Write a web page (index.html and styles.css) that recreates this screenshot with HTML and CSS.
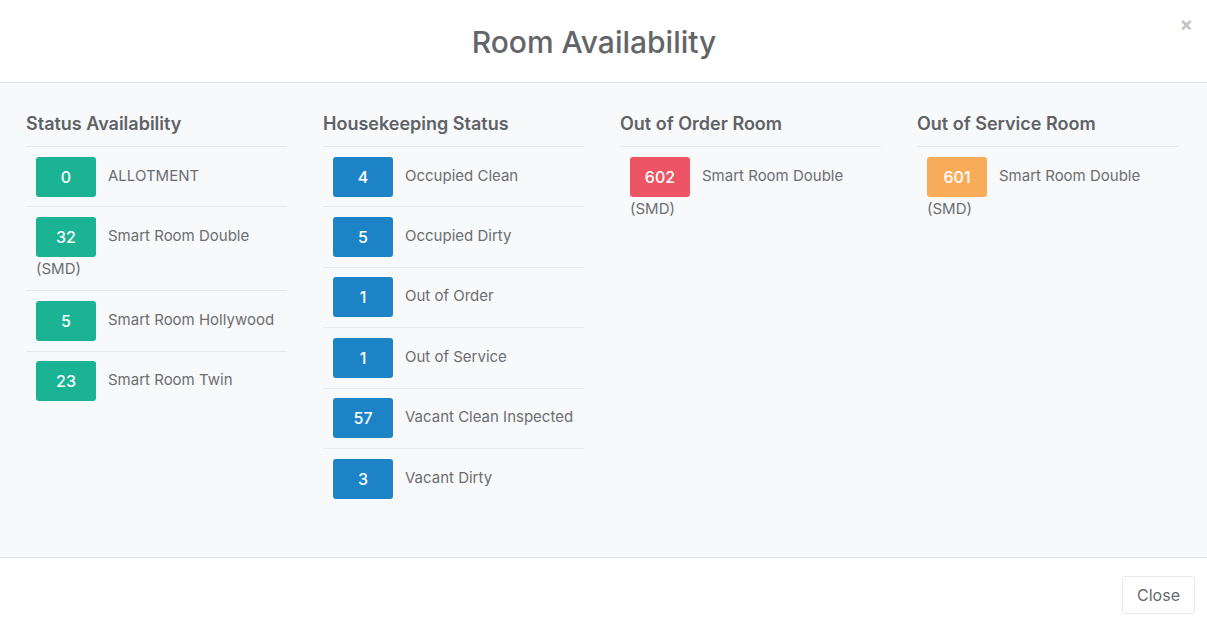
FILE: index.html
```html
<!DOCTYPE html>
<html>

<head lang="en">
  <meta charset="UTF-8">
  <title>Room Availability</title>
  <link rel="stylesheet" href="styles.css">
</head>

<body>
  <div class="modal">
    <div class="modal-header">
      <span class="close">&times;</span>
      <h4 class="modal-title">Room Availability</h4>
    </div>

    <div class="modal-body">
      <div class="col">
        <h3>Status Availability</h3>
        <ul class="list">
          <li><span class="badge green">0</span>ALLOTMENT</li>
          <li><span class="badge green">32</span>Smart Room Double (SMD)</li>
          <li><span class="badge green">5</span>Smart Room Hollywood</li>
          <li><span class="badge green">23</span>Smart Room Twin</li>
        </ul>
      </div>

      <div class="col">
        <h3>Housekeeping Status</h3>
        <ul class="list">
          <li><span class="badge blue">4</span>Occupied Clean</li>
          <li><span class="badge blue">5</span>Occupied Dirty</li>
          <li><span class="badge blue">1</span>Out of Order</li>
          <li><span class="badge blue">1</span>Out of Service</li>
          <li><span class="badge blue">57</span>Vacant Clean Inspected</li>
          <li><span class="badge blue">3</span>Vacant Dirty</li>
        </ul>
      </div>

      <div class="col">
        <h3>Out of Order Room</h3>
        <ul class="list">
          <li><span class="badge red">602</span>Smart Room Double (SMD)</li>
        </ul>
      </div>

      <div class="col">
        <h3>Out of Service Room</h3>
        <ul class="list">
          <li><span class="badge orange">601</span>Smart Room Double (SMD)</li>
        </ul>
      </div>
    </div>

    <div class="modal-footer">
      <button class="btn-white">Close</button>
    </div>
  </div>
</body>

</html>
```

FILE: styles.css
```css
* {
  margin: 0;
  padding: 0;
  box-sizing: border-box;
}

ul {
  list-style: none;
}

body {
  font-family: Inter, "Open Sans", sans-serif;
  color: #676a6c;
  background: #fff;
}

.modal {
  width: 1207px;
}

.modal-header {
  position: relative;
  height: 83px;
  border-bottom: 1px solid #e5e5e5;
  text-align: center;
  padding-right: 19px;
}

.modal-title {
  font-size: 30px;
  font-weight: 500;
  line-height: 36px;
  padding-top: 24px;
  color: #636568;
}

.close {
  position: absolute;
  top: 12px;
  right: 14px;
  font-size: 20px;
  font-weight: 700;
  line-height: 24px;
  color: #c5c5c5;
}

.modal-body {
  height: 475px;
  background: #f8f9fb;
  border-bottom: 1px solid #e5e5e5;
  padding: 30px 26px 0;
  display: grid;
  grid-template-columns: repeat(4, 261px);
  column-gap: 36px;
  align-items: start;
}

.col h3 {
  font-size: 18px;
  font-weight: 600;
  line-height: 22px;
  color: #5f6266;
  margin-bottom: 11px;
}

.list li {
  border-top: 1px solid #e7eaec;
  padding: 9.7px 10px;
  font-size: 15px;
  line-height: 23.6px;
  color: #6b6e71;
}

.badge {
  display: inline-block;
  width: 60px;
  height: 40px;
  line-height: 40px;
  margin-right: 12px;
  border-radius: 3px;
  text-align: center;
  color: #fff;
  font-size: 16px;
  font-weight: 500;
  vertical-align: middle;
}

.green {
  background: #1ab394;
}

.blue {
  background: #1c84c6;
}

.red {
  background: #ed5565;
}

.orange {
  background: #f8ac59;
}

.modal-footer {
  display: flex;
  justify-content: flex-end;
  padding: 18px 12px 8px;
}

.btn-white {
  width: 73px;
  height: 38px;
  background: #fff;
  border: 1px solid #e7eaec;
  border-radius: 3px;
  font-family: inherit;
  font-size: 16px;
  color: #676a6c;
}
```
